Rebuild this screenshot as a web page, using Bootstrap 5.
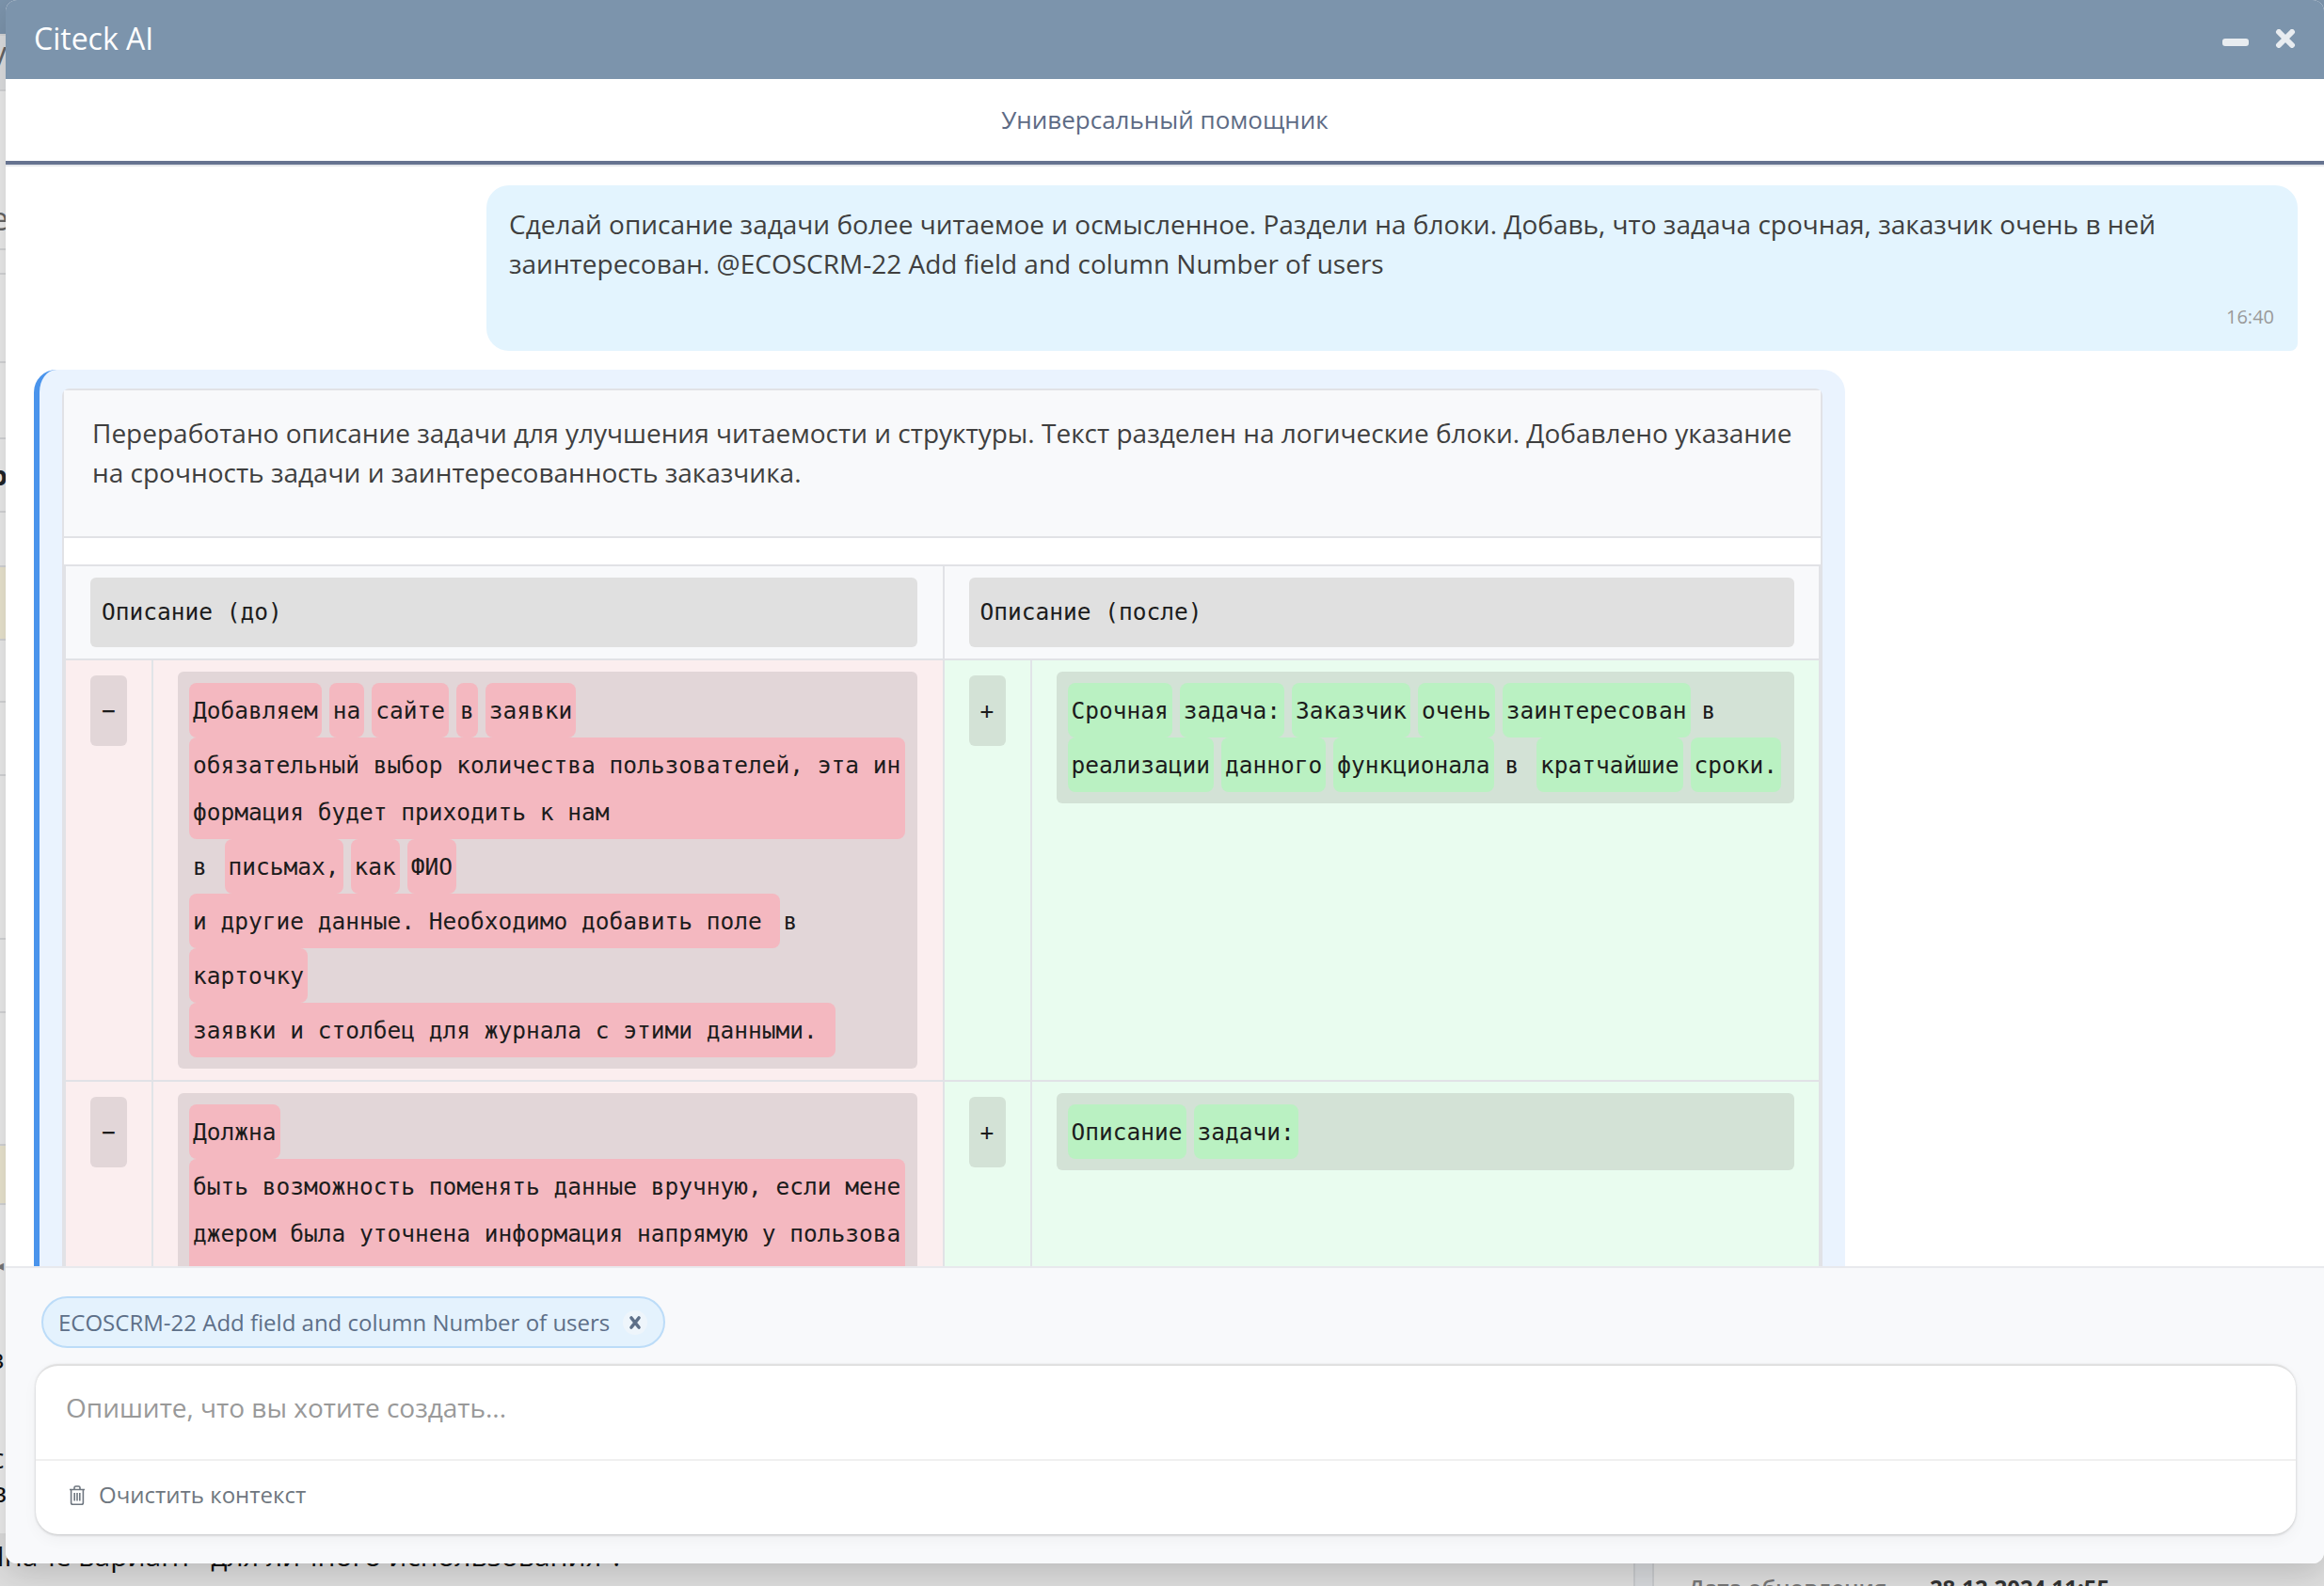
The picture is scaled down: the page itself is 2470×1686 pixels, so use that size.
<!DOCTYPE html>
<html lang="ru">
<head>
  <meta charset="UTF-8">
  <title>Citeck AI</title>
  <link href="https://cdn.jsdelivr.net/npm/bootstrap@5.3.0/dist/css/bootstrap.min.css" rel="stylesheet">
  <style>
    html, body { height: 100%; }
    body { font-family: "Open Sans", "Noto Sans", sans-serif; font-size: 28px; line-height: 42px; color: #3f3f3f; background: #ededed; overflow: hidden; }

    /* page behind the window */
    .back-page { height: 1686px; display: grid; grid-template-rows: 38px 59px 169px 26px 94px 81px 78px 58px 78px 66px 78px 174px 78px 141px 63px 1fr; }
    .back-page > div { border-bottom: 2px solid #d5d6d8; overflow: hidden; }
    .back-head { background: #7c94ac; }
    .back-sub { background: #dfe0e2; color: #666; font-size: 34px; line-height: 64px; }
    .back-yellow { background: #ece7d1; }
    .back-last { display: flex; flex-direction: column; color: #111; font-size: 30px; border: 0 !important; }
    .back-letter { margin-left: -10px; line-height: 36px; }
    .back-e { padding-bottom: 14px; }
    .back-arrow { margin-top: 46px; color: #777; font-size: 16px; margin-left: -4px; }
    .back-z { margin-top: 63px; }
    .back-c { margin-top: 70px; }
    .back-foot { margin-top: auto; display: grid; grid-template-columns: 1736px 22px 1fr; height: 56px; background: #dedede; }
    .back-foot-text { margin-left: -18px; line-height: 48px; white-space: nowrap; }
    .back-band { background: #d6d8db; border-left: 2px solid #c8cacd; border-right: 2px solid #c8cacd; }
    .back-date { padding: 46px 0 0 36px; font-size: 24px; line-height: 24px; color: #777; font-weight: 600; white-space: nowrap; }
    .back-date b { color: #333; margin-left: 39px; font-weight: 700; }

    /* chat window */
    .chat-window { position: absolute; left: 6px; top: 0; right: 0; height: 1662px; background: #fff; border-radius: 12px; overflow: hidden; box-shadow: 0 10px 36px rgba(0, 0, 0, .16); }
    .chat-head { height: 84px; padding: 0 30px 2px; background: #7c94ac; color: #fff; font-size: 32px; }
    .chat-ctrl { gap: 28px; }
    .chat-min { margin-top: 8px; }
    .chat-sub { height: 91px; flex: none; padding-bottom: 2px; border-bottom: 4px solid #667390; box-shadow: 0 2px 0 #e6e8ec; color: #5d6b85; font-size: 26px; }
    .chat-scroll { min-height: 0; padding: 22px 28px 0 30px; overflow: hidden; }

    .msg-user { width: 1925px; margin-left: auto; padding: 20px 25px 20px 24px; height: 176px; background: #e3f4fe; border-radius: 24px 24px 8px 24px; }
    .msg-time { font-size: 20px; line-height: 24px; color: #999; text-align: right; margin-top: 24px; }
    .msg-ai { width: 1925px; margin-top: 20px; padding: 20px 24px 0 24px; background: #eaf3fe; border-left: 6px solid #4a94ec; border-radius: 24px 24px 0 0; }
    .ai-card { background: #fff; border: 2px solid #e1e2e6; border-bottom: 0; border-radius: 8px 8px 0 0; }
    .ai-text { padding: 24px 20px 47px 30px; background: #f8f9fb; border-bottom: 2px solid #e1e2e6; }
    .ai-diff { margin-top: 28px; border: 2px solid #e1e2e6; border-bottom: 0; }

    /* diff rows */
    .diff-code { font-family: "DejaVu Sans Mono", "Liberation Mono", monospace; font-size: 24.5px; line-height: 50px; color: #1c1c1c; }
    .diff-cell { display: flex; padding-right: 27px; }
    .diff-right { padding-right: 26px; border-left: 2px solid #e1e2e6; }
    .diff-headrow { background: #f8f9fb; border-bottom: 2px solid #e1e2e6; }
    .diff-headrow .diff-cell { padding: 12px 27px 12px 26px; }
    .diff-headrow .diff-right { padding-right: 26px; }
    .diff-title { flex: 1; height: 74px; padding: 12px; background: #e0e0e0; border-radius: 6px; }
    .diff-row { border-bottom: 2px solid #e1e2e6; }
    .diff-del { background: #fbeeef; }
    .diff-add { background: #e9fcef; }
    .diff-gutter { flex: none; width: 93px; padding: 16px 0 0 26px; border-right: 2px solid #e1e4e8; }
    .diff-mark { width: 39px; height: 75px; line-height: 75px; text-align: center; border-radius: 6px; }
    .diff-del .diff-mark, .diff-del .diff-body { background: #e2d6d8; }
    .diff-add .diff-mark, .diff-add .diff-body { background: #d3e2d6; }
    .diff-body { flex: 1; min-width: 0; margin: 12px 0 12px 26px; padding: 12px 4px 12px 12px; border-radius: 6px; word-break: break-all; }
    .diff-w { display: inline-block; padding: 5px 4px 3px; margin-right: 8px; border-radius: 8px; vertical-align: top; }
    .diff-del .diff-w { background: #f4b8c0; }
    .diff-add .diff-w { background: #baf1c2; }
    .diff-w.diff-plain { background: none; margin-right: 0; padding-right: 4px; white-space: pre; }
    .diff-w.diff-wide { margin-right: 0; width: 761px; }
    .diff-w.diff-tail { margin-right: 0; white-space: pre; }
    .diff-clip { height: 196px; overflow: hidden; }

    /* input area */
    .chat-foot { flex: none; height: 316px; padding: 30px 30px 0 32px; background: #f8f9fb; border-top: 2px solid #e8e9ed; }
    .ctx-chip { height: 55px; width: 663px; margin-left: 6px; padding: 0 17px 0 16px; background: #e4f2fd; border: 2px solid #bcdcf8; border-radius: 28px; color: #5d6f88; font-size: 24px; line-height: 1; white-space: nowrap; }
    .ctx-close { width: 26px; height: 26px; background: #eef5fb; border-radius: 50%; }
    .input-box { height: 181px; margin-top: 17px; background: #fff; border: 0; border-top: 2px solid #e0e0e0; border-radius: 24px; box-shadow: 0 1px 3px rgba(0, 0, 0, .2), 0 6px 16px rgba(0, 0, 0, .04); }
    .input-field { height: 101px; padding: 0 32px 12px; color: #999; border-bottom: 2px solid #f0f0f0; }
    .input-tools { flex: 1; padding: 0 35px 6px; gap: 14px; color: #6f7780; font-size: 24px; }
  </style>
</head>
<body>
  <div class="back-page">
    <div class="back-head"></div>
    <div class="back-sub"><div class="back-letter">у</div></div>
    <div class="d-flex align-items-end"><div class="back-sub bg-transparent back-letter back-e">е</div></div>
    <div></div>
    <div></div>
    <div></div>
    <div class="d-flex align-items-center"><b class="back-letter text-dark">b</b></div>
    <div></div>
    <div class="back-yellow"></div>
    <div></div>
    <div></div>
    <div></div>
    <div></div>
    <div></div>
    <div class="back-yellow"></div>
    <div class="back-last">
      <div class="back-letter back-arrow">◂</div>
      <div class="back-letter back-z">з</div>
      <div class="back-letter back-c">с</div>
      <div class="back-letter">в</div>
      <div class="back-foot">
        <div class="back-foot-text">Иначе вариант "для личного использования".</div>
        <div class="back-band"></div>
        <div class="back-date">Дата обновления <b>28.12.2024 11:55</b></div>
      </div>
    </div>
  </div>

  <div class="chat-window d-flex flex-column">
    <div class="chat-head d-flex align-items-center justify-content-between flex-shrink-0">
      <span>Citeck AI</span>
      <div class="chat-ctrl d-flex align-items-center">
        <svg class="chat-min" width="28" height="8" viewBox="0 0 28 8"><rect width="28" height="8" rx="3" fill="#e8ecf0"/></svg>
        <svg width="22" height="20" viewBox="0 0 22 20"><path d="M4 3l14 14M18 3L4 17" stroke="#e8ecf0" stroke-width="6" stroke-linecap="round"/></svg>
      </div>
    </div>
    <div class="chat-sub d-flex align-items-center justify-content-center">Универсальный помощник</div>

    <div class="chat-scroll flex-grow-1">
      <div class="msg-user">
        <div>Сделай описание задачи более читаемое и осмысленное. Раздели на блоки. Добавь, что задача срочная, заказчик очень в ней заинтересован. @ECOSCRM-22 Add field and column Number of users</div>
        <div class="msg-time">16:40</div>
      </div>

      <div class="msg-ai">
        <div class="ai-card">
          <div class="ai-text">Переработано описание задачи для улучшения читаемости и структуры. Текст разделен на логические блоки. Добавлено указание на срочность задачи и заинтересованность заказчика.</div>
          <div class="ai-diff diff-code">
            <div class="row g-0 diff-headrow">
              <div class="col-6 diff-cell"><div class="diff-title">Описание (до)</div></div>
              <div class="col-6 diff-cell diff-right"><div class="diff-title">Описание (после)</div></div>
            </div>
            <div class="row g-0 diff-row">
              <div class="col-6 diff-cell diff-del">
                <div class="diff-gutter"><div class="diff-mark">−</div></div>
                <div class="diff-body"><span class="diff-w">Добавляем</span><span class="diff-w">на</span><span class="diff-w">сайте</span><span class="diff-w">в</span><span class="diff-w">заявки</span><span class="diff-w diff-wide">обязательный выбор количества пользователей, эта информация будет приходить к нам</span><span class="diff-w diff-plain">в </span><span class="diff-w">письмах,</span><span class="diff-w">как</span><span class="diff-w">ФИО</span><span class="diff-w diff-tail">и другие данные. Необходимо добавить поле </span><span class="diff-w diff-plain">в</span><span class="diff-w">карточку</span><span class="diff-w diff-tail">заявки и столбец для журнала с этими данными. </span></div>
              </div>
              <div class="col-6 diff-cell diff-right diff-add">
                <div class="diff-gutter"><div class="diff-mark">+</div></div>
                <div class="diff-body align-self-start"><span class="diff-w">Срочная</span><span class="diff-w">задача:</span><span class="diff-w">Заказчик</span><span class="diff-w">очень</span><span class="diff-w">заинтересован</span><span class="diff-w diff-plain">в </span><span class="diff-w">реализации</span><span class="diff-w">данного</span><span class="diff-w">функционала</span><span class="diff-w diff-plain">в </span><span class="diff-w">кратчайшие</span><span class="diff-w">сроки.</span></div>
              </div>
            </div>
            <div class="row g-0 diff-clip">
              <div class="col-6 diff-cell diff-del">
                <div class="diff-gutter"><div class="diff-mark">−</div></div>
                <div class="diff-body"><span class="diff-w">Должна</span><span class="diff-w diff-wide">быть возможность поменять данные вручную, если менеджером была уточнена информация напрямую у пользователя</span></div>
              </div>
              <div class="col-6 diff-cell diff-right diff-add">
                <div class="diff-gutter"><div class="diff-mark">+</div></div>
                <div class="diff-body align-self-start"><span class="diff-w">Описание</span><span class="diff-w">задачи:</span></div>
              </div>
            </div>
          </div>
        </div>
      </div>
    </div>

    <div class="chat-foot">
      <div class="ctx-chip d-flex align-items-center justify-content-between">
        <span>ECOSCRM-22 Add field and column Number of users</span>
        <span class="ctx-close d-flex align-items-center justify-content-center">
          <svg width="16" height="16" viewBox="0 0 16 16"><path d="M4 3l8 10M12 3L4 13" stroke="#5d6f88" stroke-width="3.6" stroke-linecap="round"/></svg>
        </span>
      </div>
      <div class="input-box d-flex flex-column">
        <div class="input-field d-flex align-items-center">Опишите, что вы хотите создать...</div>
        <div class="input-tools d-flex align-items-center">
          <svg width="18" height="21" viewBox="0 0 18 21" fill="none" stroke="#6f7780" stroke-width="1.6"><path d="M1 4.5h16M6 4.5V2.6C6 1.7 6.7 1 7.6 1h2.8c.9 0 1.6.7 1.6 1.6v1.9M2.6 4.5v13.9c0 1 .8 1.8 1.8 1.8h9.2c1 0 1.8-.8 1.8-1.8V4.5M6.2 8v8.6M9 8v8.6M11.8 8v8.6"/></svg>
          <span>Очистить контекст</span>
        </div>
      </div>
    </div>
  </div>
</body>
</html>
